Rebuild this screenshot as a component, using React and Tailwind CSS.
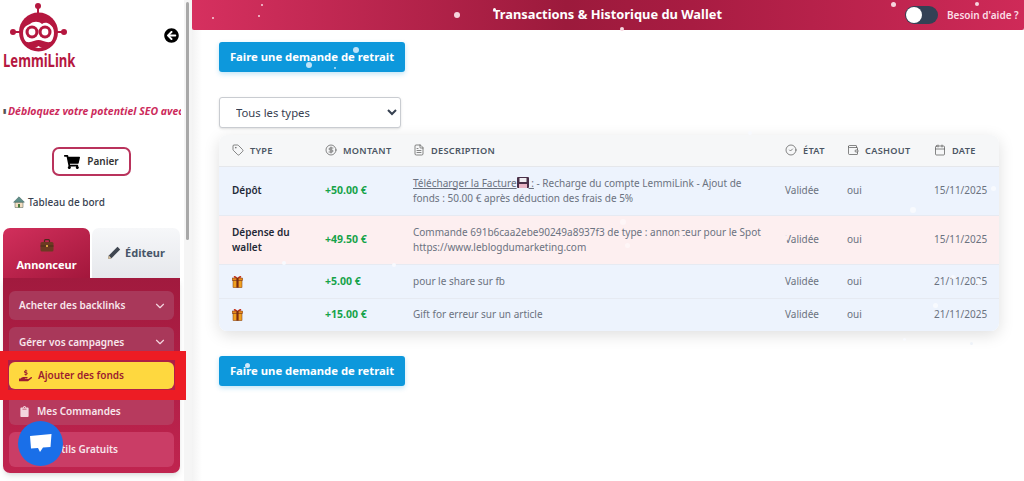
import React from "react";
import { Tag, CircleDollarSign, FileText, CircleCheck, Wallet, Calendar, ChevronDown } from "lucide-react";
import { FaShoppingCart, FaArrowCircleLeft, FaHandHoldingUsd, FaClipboard } from "react-icons/fa";

const font = { fontFamily: '"Noto Sans", sans-serif' };

const dots = [
  [457, 15, 6, "#f6d5de"], [262, 5, 2, "#f6d5de"], [259, 16, 2, "#f6d5de"], [213, 18, 2, "#f6d5de"],
  [494, 9, 3, "#ffffff"], [622, 29, 4, "#f6d5de"], [893, 4, 5, "#f6d5de"], [977, 4, 4, "#f6d5de"],
  [356, 50, 6, "#bfe3f8"], [309, 65, 6, "#bfe3f8"], [335, 68, 2, "#bfe3f8"],
  [913, 210, 6, "#f8fafe"], [623, 222, 6, "#fef6f7"], [627, 245, 5, "#fef6f7"], [993, 188, 5, "#f8fafe"],
  [979, 282, 6, "#f8fafe"], [935, 305, 5, "#f8fafe"], [785, 238, 6, "#fdf0f1"], [681, 233, 5, "#fdf0f1"],
  [247, 365, 5, "#cfe9fa"], [284, 263, 4, "#f8fafe"], [394, 265, 4, "#f8fafe"], [953, 277, 4, "#f8fafe"],
  [971, 343, 3, "#eef2f8"], [750, 133, 4, "#f8fafe"], [904, 339, 3, "#f8fafe"],
];

function Logo() {
  return (
    <svg width="60" height="52" viewBox="0 0 60 52" className="ml-[9px]">
      <g fill="#b5173f">
        <circle cx="29" cy="3" r="3" />
        <rect x="28" y="3" width="2" height="9" />
        <circle cx="4" cy="29" r="3" />
        <circle cx="55" cy="29" r="3" />
        <rect x="4" y="28" width="10" height="2" />
        <rect x="45" y="28" width="10" height="2" />
        <circle cx="29.5" cy="29" r="19.5" />
      </g>
      <ellipse cx="29.5" cy="30" rx="15.5" ry="15" fill="#ffffff" />
      <path d="M14 27 C15 12 27 12 33 15 C41 12 45 18 45 26 C40 19 36 19 33 21 C30 18 24 18 21 21 C18 22 15 24 14 27Z" fill="#b5173f" />
      <circle cx="23" cy="29" r="6.5" fill="#b5173f" />
      <circle cx="36" cy="29" r="6.5" fill="#b5173f" />
      <circle cx="23" cy="29" r="3.4" fill="#ffffff" />
      <circle cx="36" cy="29" r="3.4" fill="#ffffff" />
      <path d="M14 37 C20 42 25 37 29.5 37 C34 37 39 42 45 37 C41 48 34 46 29.5 43 C25 46 18 48 14 37Z" fill="#b5173f" />
    </svg>
  );
}

function House() {
  return (
    <svg width="12" height="12" viewBox="0 0 12 12">
      <path d="M2 6h8v5.5H2z" fill="#f2ddc0" stroke="#4a5a50" strokeWidth=".5" />
      <path d="M6 .8 .6 6.2h10.8z" fill="#5f8f8a" stroke="#3d5a55" strokeWidth=".5" />
      <rect x="5" y="8" width="2" height="3.5" fill="#4a7c3f" />
    </svg>
  );
}

function Briefcase() {
  return (
    <svg width="14" height="13" viewBox="0 0 14 13">
      <rect x="4.5" y="0.7" width="5" height="3" rx="1" fill="none" stroke="#4a2a1a" strokeWidth="1.2" />
      <rect x="0.5" y="3" width="13" height="9.5" rx="1.5" fill="#6b3a22" />
      <rect x="0.5" y="6.5" width="13" height="1" fill="#4a2a1a" />
      <rect x="6" y="6" width="2" height="2" fill="#d9a441" />
    </svg>
  );
}

function Pencil() {
  return (
    <svg width="14" height="14" viewBox="0 0 14 14">
      <path d="M10.5 .8 13.2 3.5 4.5 12.2 1 13l.8-3.5z" fill="#3f4650" />
      <path d="M1 13l.8-3.5 2.7 2.7z" fill="#d9c3a0" />
    </svg>
  );
}

function Gift() {
  return (
    <svg width="11" height="13" viewBox="0 0 11 13">
      <path d="M5.5 3C3 0 1 1 2 2.5 2.6 3 4 3 5.5 3 7 3 8.4 3 9 2.5 10 1 8 0 5.5 3Z" fill="#c7351f" />
      <rect x=".3" y="3" width="10.4" height="2.6" fill="#e8891c" stroke="#7a3410" strokeWidth=".5" />
      <rect x="1" y="5.6" width="9" height="7" fill="#f0a020" stroke="#7a3410" strokeWidth=".5" />
      <rect x="4.4" y="3" width="2.2" height="9.6" fill="#7a2a12" />
    </svg>
  );
}

function Floppy() {
  return (
    <svg width="12" height="11" viewBox="0 0 12 11" className="inline-block align-[-1px]">
      <rect width="12" height="11" rx="1" fill="#4a3048" />
      <rect x="2.5" y="1" width="7" height="4" fill="#f0eef2" />
      <rect x="2" y="7" width="8" height="4" fill="#e8b4c4" />
    </svg>
  );
}

function MenuItem({ label, className, chevron, icon, textClass, gap }) {
  return (
    <div className={`mx-[6px] rounded-[6px] flex items-center justify-between pl-[10px] pr-[7px] text-[10px] font-semibold ${textClass || "text-[#f8e6ec]"} ${className}`}>
      <span className={`flex items-center ${gap || "gap-[7px]"}`}>{icon}{label}</span>
      {chevron && <ChevronDown size={14} className="text-[#f3d5df]" />}
    </div>
  );
}

function Sidebar() {
  return (
    <aside className="w-[192px] shrink-0 flex bg-white">
      <div className="w-[184px] shrink-0 flex flex-col">
        <div className="h-[72px] pt-[3px] relative">
          <Logo />
          <div className="absolute left-[3px] top-[51px] text-[17px] leading-[20px] font-bold text-[#b5173f] origin-left scale-x-[0.77]">LemmiLink</div>
          <FaArrowCircleLeft size={15} className="absolute left-[164px] top-[28px] text-black" />
        </div>
        <div className="mt-[31px] h-[16px] pl-[3px] w-[181px] overflow-hidden whitespace-nowrap text-[10.5px] leading-[16px] italic font-bold text-[#cc2a5b]">
          <span className="text-[6px] text-[#555] not-italic align-[2px] mr-[2px]">▮</span>Débloquez votre potentiel SEO avec
        </div>
        <div className="mt-[28px] flex justify-center pr-[1px]">
          <div className="w-[79px] h-[29px] border-2 border-[#b9335c] rounded-[7px] flex items-center justify-center gap-[7px] text-[10px] font-semibold text-[#333]">
            <FaShoppingCart size={16} className="text-black" />
            Panier
          </div>
        </div>
        <div className="mt-[19px] ml-[13px] flex items-center gap-[3px] text-[10px] leading-[14px] font-medium text-[#374151]">
          <House />
          Tableau de bord
        </div>
        <div className="mt-[19px] ml-[3px] w-[177px]">
          <div className="flex h-[50px]">
            <div className="w-[87px] rounded-t-[7px] bg-gradient-to-br from-[#d22f5c] to-[#a3173c] flex flex-col items-center pt-[11px] text-white text-[11px] leading-[15px] font-bold">
              <Briefcase />
              <span className="mt-[5px]">Annonceur</span>
            </div>
            <div className="flex-1 ml-[2px] rounded-t-[7px] bg-gradient-to-b from-[#f6f7f9] to-[#e6e8ec] flex items-center justify-center gap-[4px] text-[#475569] text-[11px] font-bold">
              <Pencil />
              Éditeur
            </div>
          </div>
          <div className="h-[195px] rounded-b-[7px] bg-gradient-to-b from-[#a11a3e] to-[#c0244f] pt-[13px] shadow-md">
            <MenuItem label="Acheter des backlinks" chevron className="h-[29px] bg-[#a9385a]" />
            <MenuItem label="Gérer vos campagnes" chevron className="h-[30px] mt-[7px] bg-[#a9385a]" />
            <MenuItem
              label="Ajouter des fonds"
              className="h-[27px] mt-[5px] bg-[#fed83f] pl-[8px]"
              textClass="text-[#9b1c31]"
              gap="gap-[6px]"
              icon={<FaHandHoldingUsd size={13} className="text-[#9b1c31]" />}
            />
            <MenuItem
              label="Mes Commandes"
              className="h-[32px] mt-[4px] bg-[#b73a5e] pt-[4px]"
              icon={<FaClipboard size={11} className="text-[#f4d5de]" />}
            />
            <MenuItem
              label="Outils Gratuits"
              className="h-[35px] mt-[7px] bg-[#ca3d66] pl-[28px]"
              icon={<span className="w-[3px]" />}
            />
          </div>
        </div>
      </div>
      <div className="flex-1 relative bg-[#f5f5f5]">
        <div className="absolute left-[2px] top-[2px] w-[3px] h-[238px] rounded-full bg-[#a8a8a8]" />
      </div>
    </aside>
  );
}

function RetraitButton({ className }) {
  return (
    <button className={`w-[186px] h-[30px] rounded-[3px] bg-[#0d98dc] text-white text-[11.3px] font-bold shadow-[0_2px_5px_rgba(13,152,220,0.25)] ${className}`}>
      Faire une demande de retrait
    </button>
  );
}

const heads = [
  [Tag, "TYPE", "w-[93px]"],
  [CircleDollarSign, "MONTANT", "w-[88px]"],
  [FileText, "DESCRIPTION", "w-[372px]"],
  [CircleCheck, "ÉTAT", "w-[62px]"],
  [Wallet, "CASHOUT", "w-[87px]"],
  [Calendar, "DATE", "w-[78px]"],
];

const rows = [
  {
    h: "h-[49px]", bg: "bg-[#edf3fd]", type: "Dépôt", amount: "+50.00 €", date: "15/11/2025",
    desc: (
      <>
        <span className="underline">Télécharger la Facture<Floppy /> :</span> - Recharge du compte LemmiLink - Ajout de fonds : 50.00 € après déduction des frais de 5%
      </>
    ),
  },
  {
    h: "h-[49px]", bg: "bg-[#fdeff0]", type: "Dépense du wallet", amount: "+49.50 €", date: "15/11/2025",
    desc: "Commande 691b6caa2ebe90249a8937f3 de type : annonceur pour le Spot https://www.leblogdumarketing.com",
  },
  { h: "h-[34px]", bg: "bg-[#edf3fd]", gift: true, amount: "+5.00 €", date: "21/11/2025", desc: "pour le share sur fb" },
  { h: "h-[33px]", bg: "bg-[#edf3fd]", gift: true, amount: "+15.00 €", date: "21/11/2025", desc: "Gift for erreur sur un article" },
];

function TxTable() {
  return (
    <div className="w-[780px] mt-[7px] rounded-[8px] overflow-hidden shadow-[0_4px_16px_rgba(0,0,0,0.13)]">
      <table className="w-full table-fixed border-collapse text-[10px] leading-[15px]">
        <thead>
          <tr className="h-[31px] bg-[#f6f7f8] border-b border-[#e5e7eb]">
            {heads.map(([Icon, label, w]) => (
              <th key={label} className={`${w} pl-[13px] text-left font-semibold text-[#4b5563] text-[9.2px] tracking-[0.3px]`}>
                <span className="flex items-center gap-[6px]">
                  <Icon size={12} strokeWidth={1.4} className="text-[#555]" />
                  {label}
                </span>
              </th>
            ))}
          </tr>
        </thead>
        <tbody>
          {rows.map((r, i) => (
            <tr key={i} className={`${r.h} ${r.bg} border-b border-[#e6eaf2] last:border-b-0`}>
              <td className="pl-[13px] pr-[10px] font-semibold text-[#1f2937]">{r.gift ? <Gift /> : r.type}</td>
              <td className="pl-[13px] text-[10.5px] font-bold text-[#16a34a]">{r.amount}</td>
              <td className="pl-[13px] pr-[10px] text-[#6b7280]">{r.desc}</td>
              <td className="pl-[13px] text-[#6b7280]">Validée</td>
              <td className="pl-[13px] text-[#6b7280]">oui</td>
              <td className="pl-[13px] text-[#6b7280]">{r.date}</td>
            </tr>
          ))}
        </tbody>
      </table>
    </div>
  );
}

function Main() {
  return (
    <main className="flex-1 min-w-0 flex flex-col">
      <header className="h-[30px] shrink-0 flex items-center rounded-b-[2px] bg-[linear-gradient(90deg,#d6305f_0%,#9c1a3c_45%,#a81c42_60%,#cf2a58_100%)] shadow-[0_1px_3px_rgba(0,0,0,0.3)]">
        <div className="w-[713px] text-center pl-[118px] text-white text-[12.85px] font-bold whitespace-nowrap">
          Transactions &amp; Historique du Wallet
        </div>
        <div className="w-[33px] h-[18px] rounded-full bg-[#334155] flex items-center pl-[1px]">
          <span className="w-[16px] h-[16px] rounded-full bg-white" />
        </div>
        <div className="ml-[9px] text-[#fbdde5] text-[10px] font-semibold whitespace-nowrap">Besoin d'aide ?</div>
      </header>
      <div className="flex-1 pl-[27px] pt-[12px] bg-[linear-gradient(90deg,#f3f3f3_0,#ffffff_10px)]">
        <RetraitButton />
        <div className="mt-[25px]">
          <select className="w-[182px] h-[31px] pl-[12px] bg-white border border-[#c9ccd1] rounded-[3px] text-[11.3px] text-[#374151] shadow-sm" defaultValue="all">
            <option value="all">Tous les types</option>
          </select>
        </div>
        <TxTable />
        <RetraitButton className="mt-[25px]" />
      </div>
    </main>
  );
}

export default function App() {
  return (
    <div className="relative w-[1024px] h-[481px] overflow-hidden flex bg-white" style={font}>
      <Sidebar />
      <Main />
      {/* annotation drawn over the screenshot */}
      <div className="absolute left-0 top-[351px] w-[186px] h-[49px] border-[#ed1c24] border-t-[9px] border-b-[10px] border-l-[8px] border-r-[11px]" />
      {/* chat bubble */}
      <div className="absolute left-[18px] top-[421px] w-[45px] h-[45px] rounded-full bg-[#1a6fe8] flex items-center justify-center">
        <svg width="22" height="19" viewBox="0 0 22 19">
          <path d="M0 2 21.5 0 20.5 13 13 13.5 10 18 8 14 1 14.5Z" fill="#ffffff" />
        </svg>
      </div>
      {/* falling snow */}
      {dots.map(([x, y, d, c], i) => (
        <span
          key={i}
          className="absolute rounded-full pointer-events-none"
          style={{ left: x - d / 2, top: y - d / 2, width: d, height: d, background: c }}
        />
      ))}
    </div>
  );
}
